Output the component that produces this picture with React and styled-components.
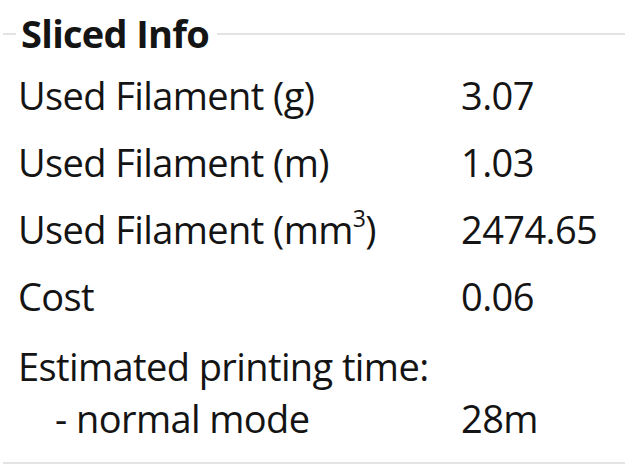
import React from 'react';
import styled, { createGlobalStyle } from 'styled-components';

const GlobalStyle = createGlobalStyle`
  html, body {
    margin: 0;
    padding: 0;
    background: #ffffff;
  }
  body {
    font-family: "Open Sans", "Noto Sans", sans-serif;
    color: #141414;
  }
`;

const Panel = styled.section`
  width: 622px;
  margin: 0 3px;
  padding: 7px 0 18px;
  border-bottom: 2px solid #e4e4e4;
`;

const TitleRow = styled.div`
  display: flex;
  align-items: center;
  height: 52px;
`;

const Rule = styled.div`
  height: 2px;
  margin-top: 1px;
  background: #e4e4e4;
  flex: ${p => (p.$grow ? 1 : '0 0 13px')};
`;

const Title = styled.h2`
  margin: 0 8px 0 5px;
  font-size: 38px;
  font-weight: 700;
  line-height: 52px;
  letter-spacing: -0.7px;
`;

const InfoGrid = styled.div`
  display: grid;
  grid-template-columns: 443px 1fr;
  row-gap: 15px;
  margin-top: 10px;
  padding-left: 15px;
  font-size: 38px;
  line-height: 52px;
  letter-spacing: -0.6px;
`;

const Label = styled.div`
  white-space: pre;
  margin-top: ${p => (p.$extra ? '3px' : '0')};
`;

const Value = styled.div`
  white-space: pre;
  margin-top: ${p => (p.$extra ? '3px' : '0')};
`;

const Sup = styled.sup`
  font-size: 23px;
  line-height: 0;
  vertical-align: 17px;
`;

const rows = [
  { label: 'Used Filament (g)', value: '3.07' },
  { label: 'Used Filament (m)', value: '1.03' },
  { label: <>Used Filament (mm<Sup>3</Sup>)</>, value: '2474.65' },
  { label: 'Cost', value: '0.06' },
  { label: 'Estimated printing time:\n    - normal mode', value: '\n28m', extra: true },
];

export default function App() {
  return (
    <>
      <GlobalStyle />
      <Panel>
        <TitleRow>
          <Rule />
          <Title>Sliced Info</Title>
          <Rule $grow />
        </TitleRow>
        <InfoGrid>
          {rows.map((r, i) => (
            <React.Fragment key={i}>
              <Label $extra={r.extra}>{r.label}</Label>
              <Value $extra={r.extra}>{r.value}</Value>
            </React.Fragment>
          ))}
        </InfoGrid>
      </Panel>
    </>
  );
}
